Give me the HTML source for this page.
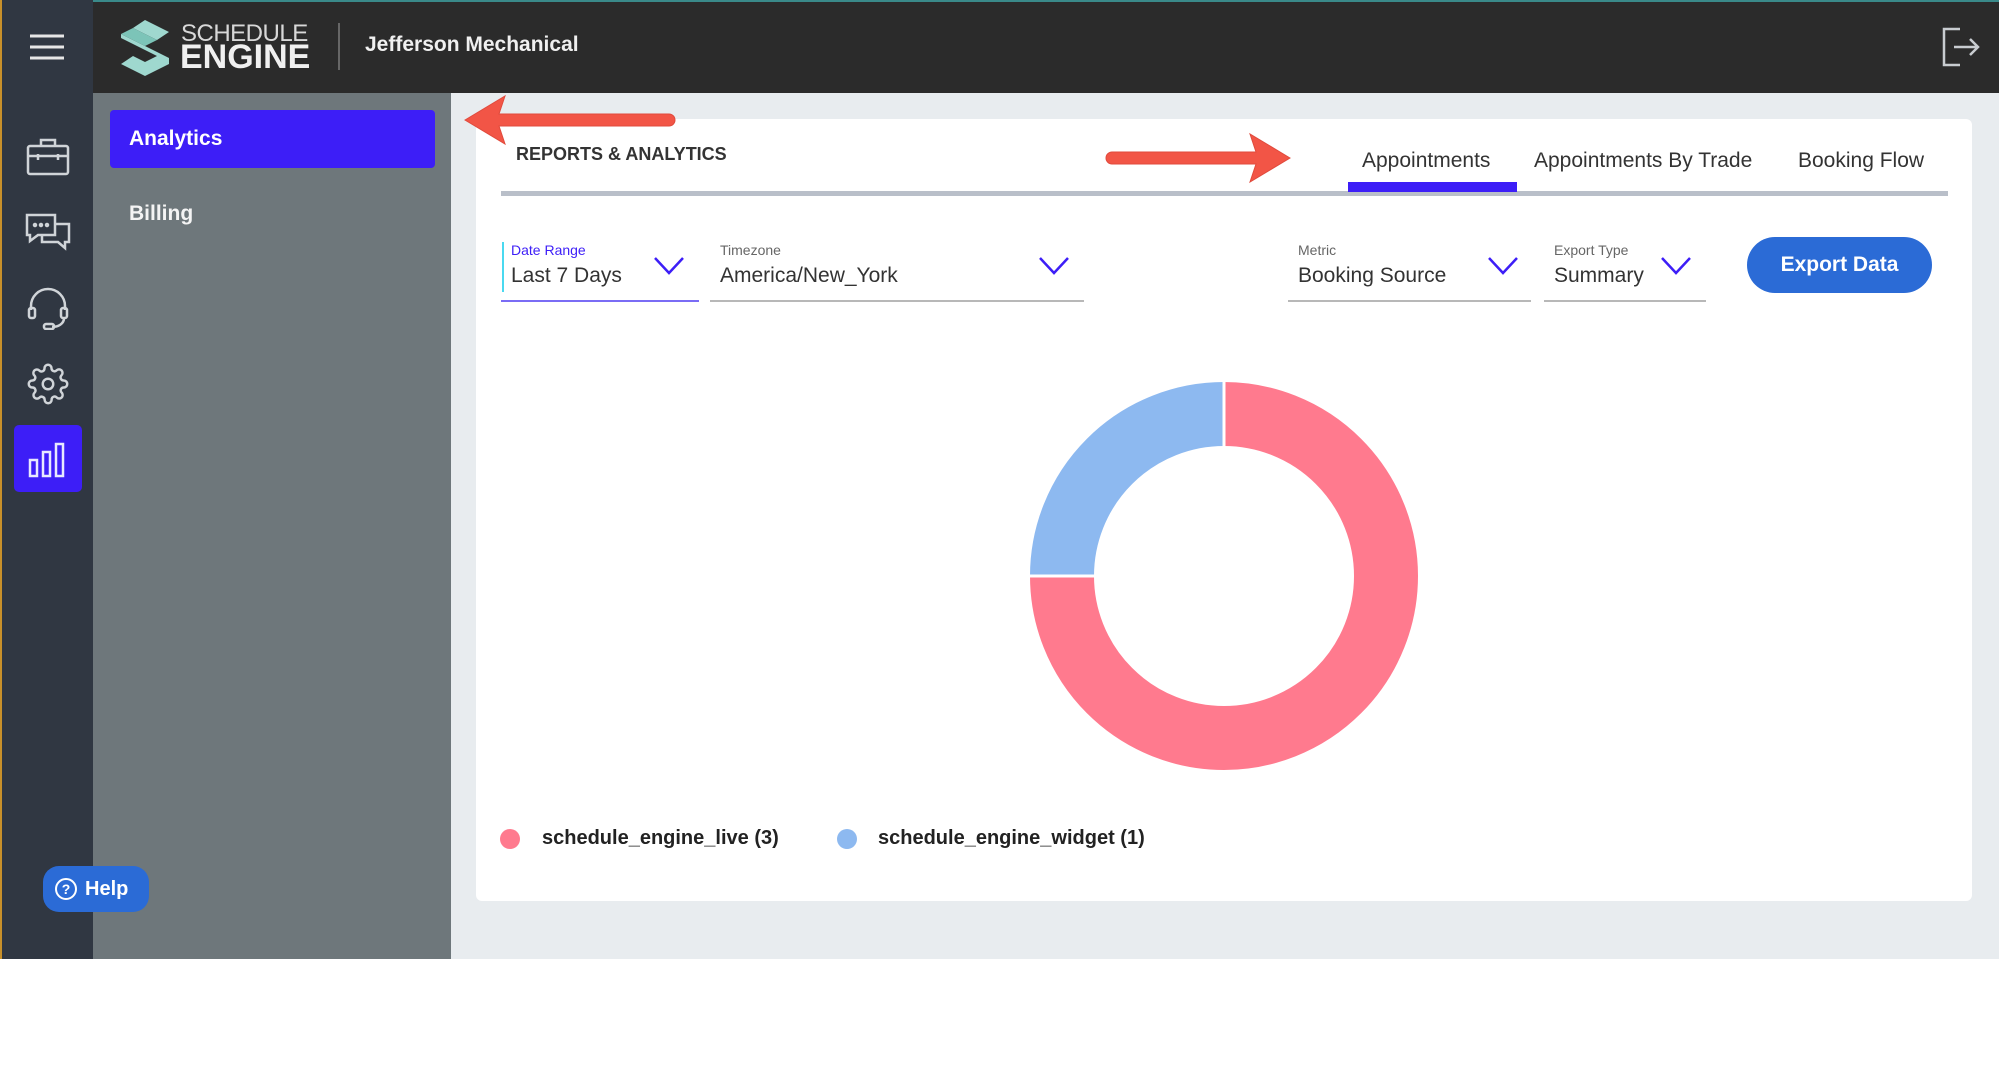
<!DOCTYPE html>
<html><head><meta charset="utf-8"><style>
*{box-sizing:border-box;margin:0;padding:0}
body{width:1999px;height:1065px;background:#fff;font-family:"Liberation Sans",sans-serif;position:relative;overflow:hidden}
.abs{position:absolute}
</style></head><body>
<div class="abs" style="left:0;top:0;width:1999px;height:959px;background:#e8ecef"></div>
<!-- top bar -->
<div class="abs" style="left:0;top:0;width:1999px;height:93px;background:#2b2b2b;border-top:2px solid #3a8a8a"></div>
<!-- rail -->
<div class="abs" style="left:0;top:0;width:93px;height:959px;background:#303742;border-left:2px solid #c8902a"></div>
<div class="abs" style="left:93px;top:93px;width:358px;height:866px;background:#6e777b"></div>
<!-- hamburger -->
<svg class="abs" style="left:28px;top:32px" width="38" height="30"><g stroke="#e6e6e6" stroke-width="3"><line x1="2" y1="4" x2="36" y2="4"/><line x1="2" y1="15" x2="36" y2="15"/><line x1="2" y1="26" x2="36" y2="26"/></g></svg>
<!-- briefcase -->
<svg class="abs" style="left:26px;top:136px" width="44" height="40" fill="none" stroke="#d0d4d8" stroke-width="2.5"><rect x="2" y="10" width="40" height="28" rx="2"/><path d="M15 10V4h14v6M2 20h40M12 18v6M32 18v6"/></svg>
<!-- chat -->
<svg class="abs" style="left:24px;top:212px" width="48" height="42" fill="none" stroke="#d0d4d8" stroke-width="2.5"><path d="M3 3h28v20H14l-8 6v-6H3z"/><path d="M31 12h14v18h-4v6l-7-6H18v-7"/><circle cx="11" cy="13" r="1" fill="#d0d4d8"/><circle cx="17" cy="13" r="1" fill="#d0d4d8"/><circle cx="23" cy="13" r="1" fill="#d0d4d8"/></svg>
<!-- headset -->
<svg class="abs" style="left:26px;top:286px" width="44" height="44" fill="none" stroke="#d0d4d8" stroke-width="2.5"><path d="M5 24V20a17 17 0 0 1 34 0v4"/><rect x="3" y="22" width="6" height="10" rx="2"/><rect x="35" y="22" width="6" height="10" rx="2"/><path d="M38 32c0 6-6 9-12 9"/><rect x="18" y="38" width="10" height="5" rx="2"/></svg>
<!-- gear -->
<svg class="abs" style="left:27px;top:363px" width="42" height="42" viewBox="0 0 24 24" fill="none" stroke="#d0d4d8" stroke-width="1.4"><circle cx="12" cy="12" r="3"/><path d="M19.4 15a1.65 1.65 0 0 0 .33 1.82l.06.06a2 2 0 1 1-2.83 2.83l-.06-.06a1.65 1.65 0 0 0-1.82-.33 1.65 1.65 0 0 0-1 1.51V21a2 2 0 1 1-4 0v-.09A1.65 1.65 0 0 0 9 19.4a1.65 1.65 0 0 0-1.82.33l-.06.06a2 2 0 1 1-2.83-2.83l.06-.06A1.65 1.65 0 0 0 4.68 15a1.65 1.65 0 0 0-1.51-1H3a2 2 0 1 1 0-4h.09A1.65 1.65 0 0 0 4.6 9a1.65 1.65 0 0 0-.33-1.82l-.06-.06a2 2 0 1 1 2.83-2.83l.06.06A1.65 1.65 0 0 0 9 4.68a1.65 1.65 0 0 0 1-1.51V3a2 2 0 1 1 4 0v.09a1.65 1.65 0 0 0 1 1.51 1.65 1.65 0 0 0 1.82-.33l.06-.06a2 2 0 1 1 2.83 2.83l-.06.06A1.65 1.65 0 0 0 19.4 9a1.65 1.65 0 0 0 1.51 1H21a2 2 0 1 1 0 4h-.09a1.65 1.65 0 0 0-1.51 1z"/></svg>
<!-- analytics active -->
<div class="abs" style="left:14px;top:425px;width:68px;height:67px;background:#3d1ef7;border-radius:5px"></div>
<svg class="abs" style="left:28px;top:440px" width="40" height="38" fill="none" stroke="#e8e8ff" stroke-width="2.5"><rect x="2" y="20" width="7" height="16"/><rect x="15" y="12" width="7" height="24"/><rect x="28" y="4" width="7" height="32"/></svg>
<!-- help -->
<div class="abs" style="left:43px;top:866px;width:106px;height:46px;background:#2b6bd6;border-radius:16px;color:#fff;font-size:20px;font-weight:bold;display:flex;align-items:center;padding-left:12px"><span style="display:inline-block;width:22px;height:22px;border:2px solid #fff;border-radius:50%;font-size:14px;text-align:center;line-height:18px;margin-right:8px">?</span>Help</div>
<!-- logo -->
<svg class="abs" style="left:117px;top:18px" width="56" height="60" viewBox="0 0 56 60"><path d="M28 2 52 14 40 22 16 10zM4 16 28 28 52 40 52 46 28 58 4 46 16 38 28 44 40 38 16 26 4 20z" fill="#9fd8cf"/><path d="M4 16 16 10 40 22 28 28z" fill="#7cc4b8"/></svg>
<div class="abs" style="left:181px;top:20px;color:#d8d8d8;font-size:24px;letter-spacing:-0.5px">SCHEDULE</div>
<div class="abs" style="left:180px;top:38px;color:#f0f0f0;font-size:34px;font-weight:bold;letter-spacing:0px">ENGINE</div>
<div class="abs" style="left:338px;top:23px;width:2px;height:47px;background:#666"></div>
<div class="abs" style="left:365px;top:33px;color:#f0f0f0;font-size:21px;font-weight:bold">Jefferson Mechanical</div>
<!-- logout -->
<svg class="abs" style="left:1940px;top:26px" width="42" height="42" fill="none" stroke="#c8ccd0" stroke-width="2.5"><path d="M20 3H4v36h16"/><path d="M14 21h24M30 13l8 8-8 8"/></svg>
<!-- second sidebar -->
<div class="abs" style="left:110px;top:110px;width:325px;height:58px;background:#3d1ef7;border-radius:4px;color:#fff;font-size:21px;font-weight:bold;padding:17px 0 0 19px">Analytics</div>
<div class="abs" style="left:129px;top:202px;color:#f4f4f4;font-size:21px;font-weight:bold">Billing</div>
<!-- card -->
<div class="abs" style="left:476px;top:119px;width:1496px;height:782px;background:#fff;border-radius:6px"></div>
<div class="abs" style="left:516px;top:144px;color:#333;font-size:18px;font-weight:bold">REPORTS &amp; ANALYTICS</div>
<div class="abs" style="left:501px;top:191px;width:1447px;height:5px;background:#b9bfc9"></div>
<div class="abs" style="left:1348px;top:182px;width:169px;height:10px;background:#3d1ef7"></div>
<div class="abs" style="left:1362px;top:149px;color:#333;font-size:21px">Appointments</div>
<div class="abs" style="left:1534px;top:149px;color:#333;font-size:21px">Appointments By Trade</div>
<div class="abs" style="left:1798px;top:149px;color:#333;font-size:21px">Booking Flow</div>
<!-- arrows -->
<svg class="abs" style="left:455px;top:90px" width="230" height="60"><path d="M10 30 50 6 44 24 214 24a6 6 0 0 1 0 12L44 36 50 54z" fill="#f25546" stroke="#e04a3c" stroke-width="1"/></svg>
<svg class="abs" style="left:1100px;top:130px" width="200" height="60"><path d="M190 28 150 4 156 22 12 22a6 6 0 0 0 0 12L156 34 150 52z" fill="#f25546" stroke="#e04a3c" stroke-width="1"/></svg>
<!-- filters -->
<div class="abs" style="left:502px;top:242px;width:2px;height:50px;background:#4ad9f0"></div>
<div class="abs" style="left:511px;top:242px;color:#3d1ef7;font-size:14px">Date Range</div>
<div class="abs" style="left:511px;top:264px;color:#333;font-size:21px">Last 7 Days</div>
<div class="abs" style="left:501px;top:300px;width:198px;height:2px;background:#7a6cf5"></div>
<div class="abs" style="left:720px;top:242px;color:#666;font-size:14px">Timezone</div>
<div class="abs" style="left:720px;top:264px;color:#333;font-size:21px">America/New_York</div>
<div class="abs" style="left:710px;top:300px;width:374px;height:2px;background:#b8b8b8"></div>
<div class="abs" style="left:1298px;top:242px;color:#666;font-size:14px">Metric</div>
<div class="abs" style="left:1298px;top:264px;color:#333;font-size:21px">Booking Source</div>
<div class="abs" style="left:1288px;top:300px;width:243px;height:2px;background:#b8b8b8"></div>
<div class="abs" style="left:1554px;top:242px;color:#666;font-size:14px">Export Type</div>
<div class="abs" style="left:1554px;top:264px;color:#333;font-size:21px">Summary</div>
<div class="abs" style="left:1544px;top:300px;width:162px;height:2px;background:#b8b8b8"></div>
<svg class="abs" style="left:653px;top:255px" width="32" height="22"><path d="M2 3 16 18 30 3" fill="none" stroke="#3d1ef7" stroke-width="2.5"/></svg>
<svg class="abs" style="left:1038px;top:255px" width="32" height="22"><path d="M2 3 16 18 30 3" fill="none" stroke="#3d1ef7" stroke-width="2.5"/></svg>
<svg class="abs" style="left:1487px;top:255px" width="32" height="22"><path d="M2 3 16 18 30 3" fill="none" stroke="#3d1ef7" stroke-width="2.5"/></svg>
<svg class="abs" style="left:1660px;top:255px" width="32" height="22"><path d="M2 3 16 18 30 3" fill="none" stroke="#3d1ef7" stroke-width="2.5"/></svg>
<div class="abs" style="left:1747px;top:237px;width:185px;height:56px;background:#2b6bd6;border-radius:28px;color:#fff;font-size:21px;font-weight:bold;text-align:center;line-height:56px">Export Data</div>
<!-- donut -->
<svg class="abs" style="left:1024px;top:376px" width="400" height="400"><g transform="translate(200,200) rotate(-90)"><circle r="162" fill="none" stroke="#ff7a8e" stroke-width="64" stroke-dasharray="763.4 1017.9"/><circle r="162" fill="none" stroke="#8db9f0" stroke-width="64" stroke-dasharray="254.5 1017.9" stroke-dashoffset="-763.4"/></g><line x1="200" y1="4" x2="200" y2="72" stroke="#fff" stroke-width="3"/><line x1="4" y1="200" x2="72" y2="200" stroke="#fff" stroke-width="3"/></svg>
<!-- legend -->
<div class="abs" style="left:500px;top:829px;width:20px;height:20px;border-radius:50%;background:#ff7a8e"></div>
<div class="abs" style="left:542px;top:827px;color:#222;font-size:20px;font-weight:bold">schedule_engine_live (3)</div>
<div class="abs" style="left:837px;top:829px;width:20px;height:20px;border-radius:50%;background:#8db9f0"></div>
<div class="abs" style="left:878px;top:827px;color:#222;font-size:20px;font-weight:bold">schedule_engine_widget (1)</div>
</body></html>
